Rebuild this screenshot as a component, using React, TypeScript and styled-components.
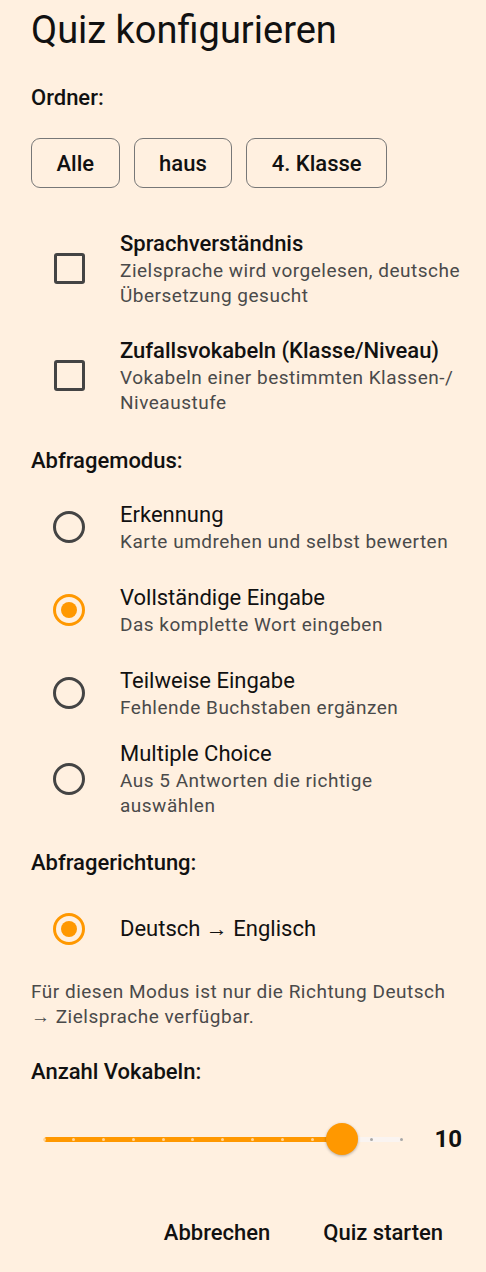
import React from "react";
import styled, { createGlobalStyle } from "styled-components";

const Global = createGlobalStyle`
  html, body { margin: 0; padding: 0; background: #FFF0E0; }
  body { font-family: Roboto, "Noto Sans", sans-serif; color: #1a1a1a; }
  * { box-sizing: border-box; }
`;

const ORANGE = "#FF9800";

const Page = styled.div`
  width: 486px;
  min-height: 1272px;
  background: #FFF0E0;
  padding: 7px 24px 0 31px;
  display: flex;
  flex-direction: column;
`;

const Title = styled.h1`
  margin: 0;
  font-size: 38px;
  line-height: 46px;
  font-weight: 400;
  color: #111;
`;

const SectionLabel = styled.div<{ $top: number }>`
  margin-top: ${(p) => p.$top}px;
  font-size: 22px;
  line-height: 28px;
  font-weight: 500;
  color: #111;
`;

const ChipRow = styled.div`
  display: flex;
  gap: 14px;
  margin-top: 26.5px;
`;

const Chip = styled.button`
  height: 50px;
  padding: 0 24.5px;
  border: 1.5px solid #777;
  border-radius: 9px;
  background: transparent;
  font-family: Roboto, sans-serif;
  font-size: 22px;
  font-weight: 500;
  color: #111;
`;

const OptionList = styled.div<{ $top: number; $gap: number }>`
  margin-top: ${(p) => p.$top}px;
  display: flex;
  flex-direction: column;
  gap: ${(p) => p.$gap}px;
`;

const OptionRow = styled.div<{ $min?: number }>`
  display: flex;
  align-items: center;
  min-height: ${(p) => p.$min ?? 0}px;
  padding-left: 22px;
`;

const Control = styled.div`
  width: 32px;
  flex: none;
  margin-right: 35px;
  display: flex;
  justify-content: center;
  align-items: center;
`;

const CheckBox = styled.span`
  width: 31px;
  height: 31px;
  border: 3.5px solid #444;
  border-radius: 3px;
`;

const Radio = styled.span<{ $on?: boolean }>`
  width: 32px;
  height: 32px;
  border-radius: 50%;
  border: 3.5px solid ${(p) => (p.$on ? ORANGE : "#444")};
  display: flex;
  align-items: center;
  justify-content: center;
  &::after {
    content: "";
    display: ${(p) => (p.$on ? "block" : "none")};
    width: 16px;
    height: 16px;
    border-radius: 50%;
    background: ${ORANGE};
  }
`;

const OptionText = styled.div`
  display: flex;
  flex-direction: column;
  width: 346px;
`;

const OptionTitle = styled.div<{ $weight?: number }>`
  font-size: 22px;
  line-height: 28px;
  font-weight: ${(p) => p.$weight ?? 400};
  color: #111;
  white-space: nowrap;
`;

const OptionSub = styled.div`
  font-size: 19px;
  line-height: 25px;
  color: #4a4a4a;
  letter-spacing: 0.5px;
`;

const Note = styled.p`
  margin: 14px 0 0;
  font-size: 19px;
  line-height: 25px;
  color: #4a4a4a;
  letter-spacing: 0.5px;
`;

const SliderRow = styled.div`
  margin-top: 29.5px;
  height: 48px;
  display: flex;
  align-items: center;
  padding-left: 13px;
  gap: 33px;
`;

const Track = styled.div`
  position: relative;
  flex: 1;
  height: 5px;
  border-radius: 3px;
  background: #FAF4F1;
`;

const ActiveTrack = styled.div`
  position: absolute;
  left: 0;
  top: 0;
  bottom: 0;
  border-radius: 3px;
  background: ${ORANGE};
`;

const Tick = styled.span<{ $active: boolean }>`
  position: absolute;
  top: 1px;
  width: 3px;
  height: 3px;
  margin-left: -1.5px;
  border-radius: 50%;
  background: ${(p) => (p.$active ? "#FFD59A" : "#a8a8a8")};
`;

const Thumb = styled.span`
  position: absolute;
  top: 50%;
  width: 32px;
  height: 32px;
  margin: -16px 0 0 -16px;
  border-radius: 50%;
  background: ${ORANGE};
  box-shadow: 0 1px 3px rgba(0, 0, 0, 0.3);
`;

const Value = styled.div`
  font-size: 24px;
  font-weight: 700;
  color: #111;
`;

const Actions = styled.div`
  margin-top: 45.5px;
  display: flex;
  justify-content: flex-end;
  gap: 15px;
`;

const TextButton = styled.button`
  height: 48px;
  padding: 0 19px;
  border: none;
  background: transparent;
  font-family: Roboto, sans-serif;
  font-size: 22px;
  font-weight: 500;
  color: #111;
`;

const modes = [
  { t: "Erkennung", s: "Karte umdrehen und selbst bewerten", on: false },
  { t: "Vollständige Eingabe", s: "Das komplette Wort eingeben", on: true },
  { t: "Teilweise Eingabe", s: "Fehlende Buchstaben ergänzen", on: false },
  { t: "Multiple Choice", s: "Aus 5 Antworten die richtige auswählen", on: false },
];

export default function App() {
  const steps = 12;
  const value = 10;
  const pct = (value / steps) * 100;
  return (
    <>
      <Global />
      <Page>
        <Title>Quiz konfigurieren</Title>
        <SectionLabel $top={30.5}>Ordner:</SectionLabel>
        <ChipRow>
          <Chip>Alle</Chip>
          <Chip>haus</Chip>
          <Chip>4. Klasse</Chip>
        </ChipRow>

        <OptionList $top={41.5} $gap={29}>
          <OptionRow>
            <Control><CheckBox /></Control>
            <OptionText>
              <OptionTitle $weight={500}>Sprachverständnis</OptionTitle>
              <OptionSub>Zielsprache wird vorgelesen, deutsche Übersetzung gesucht</OptionSub>
            </OptionText>
          </OptionRow>
          <OptionRow>
            <Control><CheckBox /></Control>
            <OptionText>
              <OptionTitle $weight={500}>Zufallsvokabeln (Klasse/Niveau)</OptionTitle>
              <OptionSub>Vokabeln einer bestimmten Klassen-/ Niveaustufe</OptionSub>
            </OptionText>
          </OptionRow>
        </OptionList>

        <SectionLabel $top={32}>Abfragemodus:</SectionLabel>
        <OptionList $top={16.5} $gap={11}>
          {modes.map((m) => (
            <OptionRow key={m.t} $min={72}>
              <Control><Radio $on={m.on} /></Control>
              <OptionText>
                <OptionTitle>{m.t}</OptionTitle>
                <OptionSub>{m.s}</OptionSub>
              </OptionText>
            </OptionRow>
          ))}
        </OptionList>

        <SectionLabel $top={30.5}>Abfragerichtung:</SectionLabel>
        <OptionList $top={16.5} $gap={0}>
          <OptionRow $min={72}>
            <Control><Radio $on /></Control>
            <OptionText>
              <OptionTitle>Deutsch → Englisch</OptionTitle>
            </OptionText>
          </OptionRow>
        </OptionList>
        <Note>Für diesen Modus ist nur die Richtung Deutsch → Zielsprache verfügbar.</Note>

        <SectionLabel $top={28.5}>Anzahl Vokabeln:</SectionLabel>
        <SliderRow>
          <Track>
            <ActiveTrack style={{ width: `${pct}%` }} />
            {Array.from({ length: steps + 1 }, (_, i) => (
              <Tick key={i} $active={i <= value} style={{ left: `${(i / steps) * 100}%` }} />
            ))}
            <Thumb style={{ left: `${pct}%` }} />
          </Track>
          <Value>{value}</Value>
        </SliderRow>

        <Actions>
          <TextButton>Abbrechen</TextButton>
          <TextButton>Quiz starten</TextButton>
        </Actions>
      </Page>
    </>
  );
}
